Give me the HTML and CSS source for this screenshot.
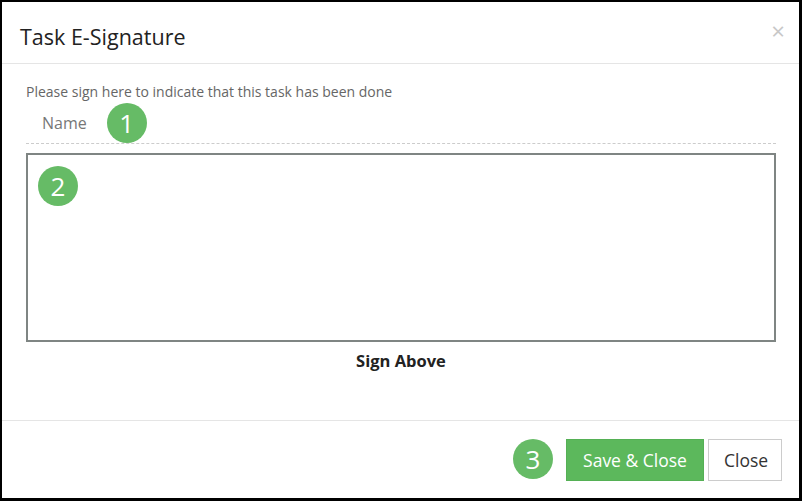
FILE: index.html
```html
<!DOCTYPE html>
<html lang="en">
<head>
  <meta charset="UTF-8">
  <title>Task E-Signature</title>
  <link rel="stylesheet" href="styles.css">
</head>
<body>
  <div class="modal">
    <div class="modal-header">
      <h4 class="modal-title">Task E-Signature</h4>
      <span class="close">&times;</span>
    </div>

    <div class="modal-body">
      <p class="hint">Please sign here to indicate that this task has been done</p>
      <div class="name-row">
        <span class="name">Name</span>
        <span class="step">1</span>
      </div>
      <div class="sign-pad">
        <span class="step step-pad">2</span>
      </div>
      <div class="sign-label">Sign Above</div>
    </div>

    <div class="modal-footer">
      <span class="step">3</span>
      <button class="btn btn-success">Save &amp; Close</button>
      <button class="btn btn-default">Close</button>
    </div>
  </div>
</body>
</html>
```

FILE: styles.css
```css
body {
  margin: 0;
  font-family: 'Open Sans', sans-serif;
  color: #333;
  background: #000;
}

.modal {
  width: 802px;
  height: 501px;
  box-sizing: border-box;
  border: solid #000;
  border-width: 2px 3px 3px 2px;
  background: #fff;
  display: flex;
  flex-direction: column;
}

.modal-header {
  height: 62px;
  box-sizing: border-box;
  border-bottom: 1px solid #e5e5e5;
  padding: 21px 14px 0 18px;
  display: flex;
  justify-content: space-between;
  align-items: flex-start;
}

.modal-title {
  margin: 0;
  font-size: 21.5px;
  font-weight: 400;
  line-height: 28px;
  color: #222;
}

.close {
  font-size: 24px;
  line-height: 20px;
  color: #c8c8c8;
  margin-top: -2px;
}

.modal-body {
  height: 356px;
  box-sizing: border-box;
  padding: 18px 23px 0 24px;
}

.hint {
  margin: 0;
  font-size: 14px;
  line-height: 20px;
  color: #666;
}

.name-row {
  margin-top: 1px;
  height: 40px;
  padding-left: 16px;
  display: flex;
  align-items: center;
  gap: 20px;
  border-bottom: 1px dashed #ccc;
}

.name {
  font-size: 16px;
  color: #777;
}

.step {
  width: 40px;
  height: 40px;
  border-radius: 50%;
  background: #66bb66;
  color: #fff;
  font-size: 26px;
  line-height: 40px;
  text-align: center;
  flex-shrink: 0;
}

.sign-pad {
  position: relative;
  margin-top: 9px;
  height: 189px;
  box-sizing: border-box;
  border: 2px solid #7f8583;
}

.step-pad {
  position: absolute;
  left: 10px;
  top: 11px;
}

.sign-label {
  margin-top: 8px;
  text-align: center;
  font-size: 16.5px;
  font-weight: 700;
  line-height: 22px;
  color: #222;
}

.modal-footer {
  flex: 1;
  border-top: 1px solid #e5e5e5;
  padding: 18px 17px 0 0;
  display: flex;
  justify-content: flex-end;
  align-items: flex-start;
}

.modal-footer .step {
  margin-right: 13px;
}

.btn {
  height: 42px;
  padding: 0 15px;
  font-family: inherit;
  font-size: 17.5px;
  border-radius: 0;
  cursor: pointer;
}

.btn-success {
  width: 138px;
  background: #5cb85c;
  border: 1px solid #55b055;
  color: #fff;
}

.btn-default {
  width: 74px;
  margin-left: 4px;
  background: #fff;
  border: 1px solid #ccc;
  color: #333;
}
```
